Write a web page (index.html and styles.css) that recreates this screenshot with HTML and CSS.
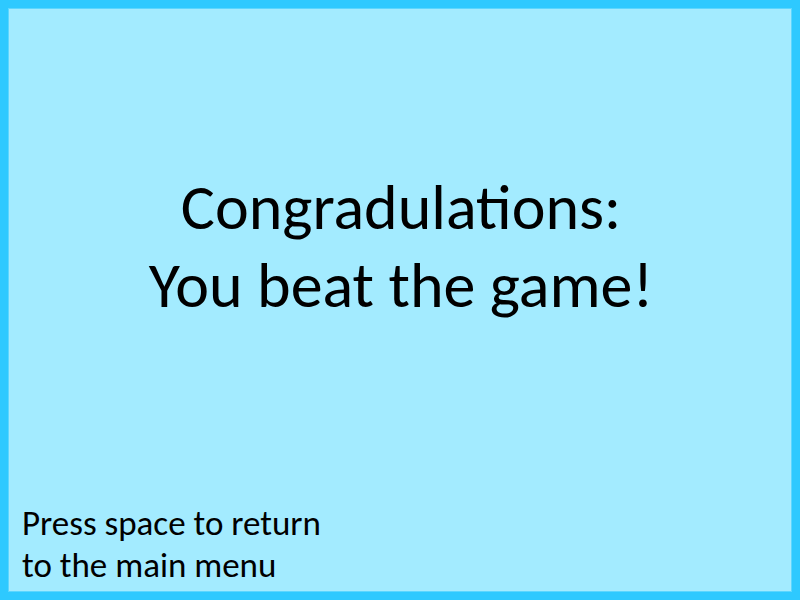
FILE: index.html
```html
<!DOCTYPE html>
<html lang="en">
<head>
<meta charset="utf-8">
<title>You beat the game</title>
<link rel="stylesheet" href="styles.css">
</head>
<body>
<main class="screen">
<h1 class="title">Congradulations:<br>You beat the game!</h1>
<p class="hint">Press space to return<br>to the main menu</p>
</main>
</body>
</html>
```

FILE: styles.css
```css
* {
  box-sizing: border-box;
}

body {
  margin: 0;
  font-family: Carlito, Calibri, Lato, sans-serif;
  color: #000;
}

.screen {
  display: flex;
  flex-direction: column;
  justify-content: space-between;
  min-height: 100vh;
  padding: 160px 12px 6px 14px;
  border: 8px solid #2ec9ff;
  background: #a3ebff;
  box-shadow: inset 0 0 0 1px #5cd6ff;
}

.title {
  margin: 0;
  font-size: 64px;
  font-weight: 400;
  line-height: 78px;
  text-align: center;
}

.hint {
  margin: 0;
  font-size: 35px;
  line-height: 42px;
}
```
